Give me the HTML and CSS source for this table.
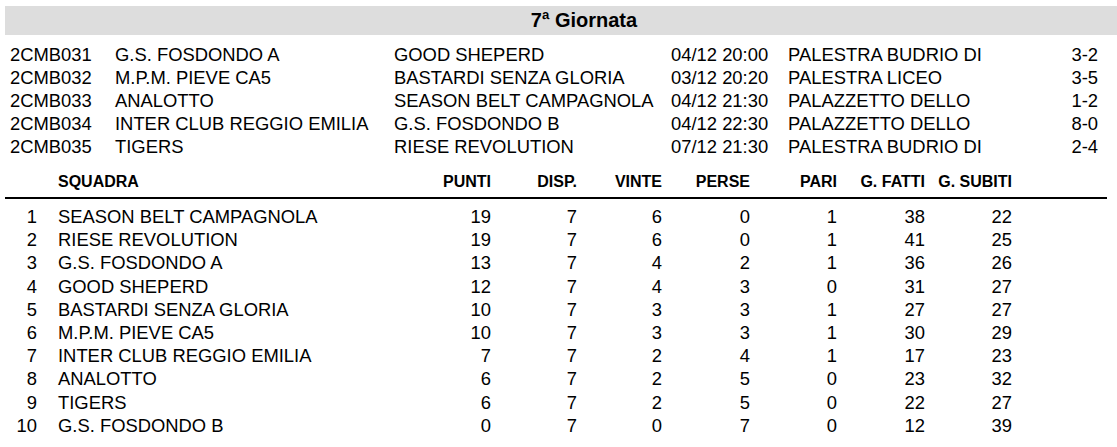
FILE: index.html
```html
<!DOCTYPE html>
<html lang="it">
<head>
<meta charset="utf-8">
<title>7ª Giornata</title>
<link rel="stylesheet" href="styles.css">
</head>
<body>
<div class="page">
  <div class="title-bar">7ª Giornata</div>

  <div class="matches">
    <div class="match"><span>2CMB031</span><span>G.S. FOSDONDO A</span><span>GOOD SHEPERD</span><span>04/12 20:00</span><span>PALESTRA BUDRIO DI</span><span class="score">3-2</span></div>
    <div class="match"><span>2CMB032</span><span>M.P.M. PIEVE CA5</span><span>BASTARDI SENZA GLORIA</span><span>03/12 20:20</span><span>PALESTRA LICEO</span><span class="score">3-5</span></div>
    <div class="match"><span>2CMB033</span><span>ANALOTTO</span><span>SEASON BELT CAMPAGNOLA</span><span>04/12 21:30</span><span>PALAZZETTO DELLO</span><span class="score">1-2</span></div>
    <div class="match"><span>2CMB034</span><span>INTER CLUB REGGIO EMILIA</span><span>G.S. FOSDONDO B</span><span>04/12 22:30</span><span>PALAZZETTO DELLO</span><span class="score">8-0</span></div>
    <div class="match"><span>2CMB035</span><span>TIGERS</span><span>RIESE REVOLUTION</span><span>07/12 21:30</span><span>PALESTRA BUDRIO DI</span><span class="score">2-4</span></div>
  </div>

  <div class="standings">
    <div class="row head"><span></span><span class="name">SQUADRA</span><span>PUNTI</span><span>DISP.</span><span>VINTE</span><span>PERSE</span><span>PARI</span><span>G. FATTI</span><span>G. SUBITI</span></div>
    <div class="body">
      <div class="row"><span>1</span><span class="name">SEASON BELT CAMPAGNOLA</span><span>19</span><span>7</span><span>6</span><span>0</span><span>1</span><span>38</span><span>22</span></div>
      <div class="row"><span>2</span><span class="name">RIESE REVOLUTION</span><span>19</span><span>7</span><span>6</span><span>0</span><span>1</span><span>41</span><span>25</span></div>
      <div class="row"><span>3</span><span class="name">G.S. FOSDONDO A</span><span>13</span><span>7</span><span>4</span><span>2</span><span>1</span><span>36</span><span>26</span></div>
      <div class="row"><span>4</span><span class="name">GOOD SHEPERD</span><span>12</span><span>7</span><span>4</span><span>3</span><span>0</span><span>31</span><span>27</span></div>
      <div class="row"><span>5</span><span class="name">BASTARDI SENZA GLORIA</span><span>10</span><span>7</span><span>3</span><span>3</span><span>1</span><span>27</span><span>27</span></div>
      <div class="row"><span>6</span><span class="name">M.P.M. PIEVE CA5</span><span>10</span><span>7</span><span>3</span><span>3</span><span>1</span><span>30</span><span>29</span></div>
      <div class="row"><span>7</span><span class="name">INTER CLUB REGGIO EMILIA</span><span>7</span><span>7</span><span>2</span><span>4</span><span>1</span><span>17</span><span>23</span></div>
      <div class="row"><span>8</span><span class="name">ANALOTTO</span><span>6</span><span>7</span><span>2</span><span>5</span><span>0</span><span>23</span><span>32</span></div>
      <div class="row"><span>9</span><span class="name">TIGERS</span><span>6</span><span>7</span><span>2</span><span>5</span><span>0</span><span>22</span><span>27</span></div>
      <div class="row"><span>10</span><span class="name">G.S. FOSDONDO B</span><span>0</span><span>7</span><span>0</span><span>7</span><span>0</span><span>12</span><span>39</span></div>
    </div>
  </div>
</div>
</body>
</html>
```

FILE: styles.css
```css
html, body {
  margin: 0;
  padding: 0;
  overflow: hidden;
  background: #ffffff;
}

body {
  font-family: "Liberation Sans", Arial, sans-serif;
  color: #000000;
}

.page {
  padding: 6px 0 0 5px;
}

.title-bar {
  width: 1158px;
  height: 29px;
  line-height: 29px;
  background: #dddddd;
  text-align: center;
  font-weight: bold;
  font-size: 20px;
}

.matches {
  width: 1088px;
  margin-top: 8px;
  padding-left: 5px;
  font-size: 18.4px;
  line-height: 23px;
}

.match {
  display: grid;
  grid-template-columns: 105px 279px 277px 117px 1fr auto;
  white-space: nowrap;
}

.score {
  text-align: right;
}

.standings {
  width: 1102px;
  margin-top: 14px;
}

.row {
  display: grid;
  grid-template-columns: 32px 394px 60px 86px 85px 88px 87px 88px 87px 1fr;
  white-space: nowrap;
  text-align: right;
}

.row .name {
  text-align: left;
  padding-left: 21px;
}

.head {
  font-weight: bold;
  font-size: 16px;
  line-height: 20px;
  padding-bottom: 5px;
  border-bottom: 2px solid #000000;
}

.body {
  margin-top: 6px;
  font-size: 18.4px;
  line-height: 23.2px;
}
```
